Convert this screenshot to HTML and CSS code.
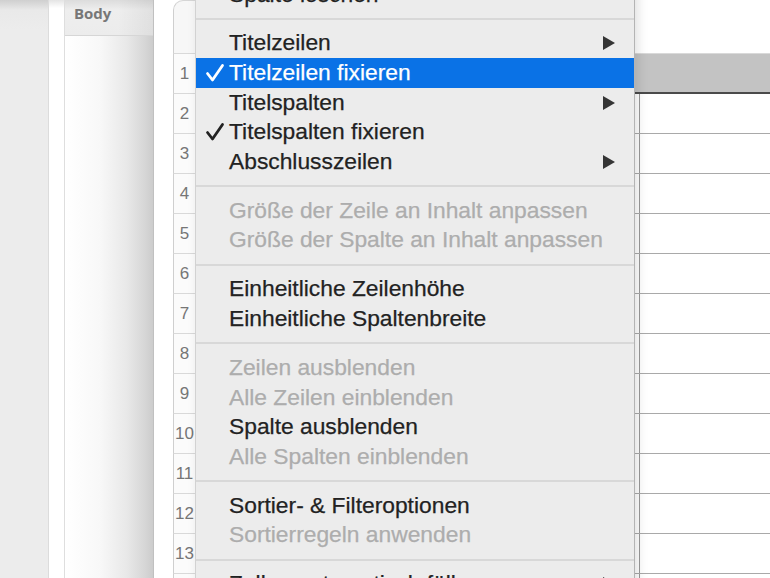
FILE: index.html
```html
<!DOCTYPE html>
<html lang="de">
<head>
<meta charset="utf-8">
<title>Tabelle Menü</title>
<link rel="stylesheet" href="styles.css">
</head>
<body>
<div class="app">
  <div class="side"></div>
  <div class="gap1"></div>
  <div class="panel">
    <div class="panel-head">Body</div>
    <div class="panel-body"></div>
  </div>
  <div class="gap2"></div>
  <div class="sheet">
    <div class="row row-top"><div class="rh corner"></div><div class="c1"></div><div class="c2"></div></div>
    <div class="row row-head"><div class="rh">1</div><div class="c1"></div><div class="c2"></div></div>
    <div class="row"><div class="rh">2</div><div class="c1"></div><div class="c2"></div></div>
    <div class="row"><div class="rh">3</div><div class="c1"></div><div class="c2"></div></div>
    <div class="row"><div class="rh">4</div><div class="c1"></div><div class="c2"></div></div>
    <div class="row"><div class="rh">5</div><div class="c1"></div><div class="c2"></div></div>
    <div class="row"><div class="rh">6</div><div class="c1"></div><div class="c2"></div></div>
    <div class="row"><div class="rh">7</div><div class="c1"></div><div class="c2"></div></div>
    <div class="row"><div class="rh">8</div><div class="c1"></div><div class="c2"></div></div>
    <div class="row"><div class="rh">9</div><div class="c1"></div><div class="c2"></div></div>
    <div class="row"><div class="rh">10</div><div class="c1"></div><div class="c2"></div></div>
    <div class="row"><div class="rh">11</div><div class="c1"></div><div class="c2"></div></div>
    <div class="row"><div class="rh">12</div><div class="c1"></div><div class="c2"></div></div>
    <div class="row"><div class="rh">13</div><div class="c1"></div><div class="c2"></div></div>
    <div class="row"><div class="rh"></div><div class="c1"></div><div class="c2"></div></div>
  </div>
</div>

<div class="menu">
  <div class="item">Spalte löschen</div>
  <div class="sep"></div>
  <div class="item">Titelzeilen<span class="arrow"></span></div>
  <div class="item active"><svg class="check" viewBox="0 0 20 20" width="20" height="20"><path d="M2.5 10.5 L7.5 17 L17.5 2.5" fill="none" stroke="currentColor" stroke-width="2.8" stroke-linecap="round" stroke-linejoin="round"/></svg>Titelzeilen fixieren</div>
  <div class="item">Titelspalten<span class="arrow"></span></div>
  <div class="item"><svg class="check" viewBox="0 0 20 20" width="20" height="20"><path d="M2.5 10.5 L7.5 17 L17.5 2.5" fill="none" stroke="currentColor" stroke-width="2.8" stroke-linecap="round" stroke-linejoin="round"/></svg>Titelspalten fixieren</div>
  <div class="item">Abschlusszeilen<span class="arrow"></span></div>
  <div class="sep"></div>
  <div class="item off">Größe der Zeile an Inhalt anpassen</div>
  <div class="item off">Größe der Spalte an Inhalt anpassen</div>
  <div class="sep"></div>
  <div class="item">Einheitliche Zeilenhöhe</div>
  <div class="item">Einheitliche Spaltenbreite</div>
  <div class="sep"></div>
  <div class="item off">Zeilen ausblenden</div>
  <div class="item off">Alle Zeilen einblenden</div>
  <div class="item">Spalte ausblenden</div>
  <div class="item off">Alle Spalten einblenden</div>
  <div class="sep"></div>
  <div class="item">Sortier- &amp; Filteroptionen</div>
  <div class="item off">Sortierregeln anwenden</div>
  <div class="sep"></div>
  <div class="item">Zellen automatisch füllen<span class="arrow"></span></div>
</div>
</body>
</html>
```

FILE: styles.css
```css
html, body {
  margin: 0;
  padding: 0;
}
body {
  width: 770px;
  height: 578px;
  overflow: hidden;
  position: relative;
  background: #ffffff;
  font-family: "Liberation Sans", Arial, sans-serif;
}
.app {
  display: flex;
  height: 578px;
}
.side {
  width: 48px;
  flex: none;
  background: linear-gradient(#cfcfcf 0px, #e9e9e9 10px, #ececec 30px);
  border-right: 1px solid #dcdcdc;
}
.gap1 {
  width: 15px;
  flex: none;
  background: linear-gradient(#e4e4e4 0px, #ffffff 8px);
  border-right: 1px solid #dedede;
}
.panel {
  width: 88px;
  flex: none;
  display: flex;
  flex-direction: column;
  border-right: 1px solid #c0c0c0;
}
.panel-head {
  height: 35px;
  border-bottom: 1px solid #d6d6d6;
  background: linear-gradient(90deg, rgba(255,255,255,0) 60%, rgba(0,0,0,0.06) 100%), linear-gradient(#dcdcdc 0px, #eeeeee 10px, #ececec);
  color: #777777;
  font-family: "Open Sans", "Liberation Sans", sans-serif;
  font-weight: 700;
  font-size: 15px;
  line-height: 26px;
  padding-left: 9px;
}
.panel-body {
  flex: 1;
  background: linear-gradient(90deg, #ffffff 0px, #f8f8f8 35px, #e8e8e8 62px, #d6d6d6 80px, #cccccc 88px);
}
.gap2 {
  width: 19px;
  flex: none;
  background: #ffffff;
}
.sheet {
  flex: 1;
  display: flex;
  flex-direction: column;
}
.row {
  display: flex;
  height: 40px;
  flex: none;
  box-sizing: border-box;
  border-bottom: 1px solid #a9a9a9;
}
.rh {
  width: 22px;
  flex: none;
  box-sizing: border-box;
  border-left: 1px solid #cfcfcf;
  background: #fbfbfb;
  color: #767676;
  font-size: 17px;
  line-height: 40px;
  text-align: center;
  white-space: nowrap;
  overflow: visible;
}
.c1 {
  width: 445px;
  flex: none;
  box-sizing: border-box;
  border-right: 1px solid #9a9a9a;
}
.c2 {
  flex: 1;
}
.row-top {
  height: 54px;
  border-bottom: none;
}
.row-top .corner {
  border-top: 1px solid #d6d6d6;
  border-top-left-radius: 10px;
  border-bottom: 1px solid #cfcfcf;
  background: #f7f7f7;
}
.row-top .c1 {
  border-right: none;
  border-bottom: 1px solid #d9d9d9;
}
.row-top .c2 {
  border-bottom: 1px solid #d9d9d9;
}
.row-head {
  border-bottom: none;
}
.row-head .rh {
  border-bottom: 1px solid #d6d6d6;
}
.row-head .c1,
.row-head .c2 {
  background: #c3c3c3;
  border-bottom: 2px solid #4a4a4a;
  border-right: none;
}
.row .rh {
  margin-bottom: -1px;
  border-bottom: 1px solid #d9d9d9;
}
.row-top .rh {
  margin-bottom: 0;
}
.row-head .rh {
  margin-bottom: 0;
}

/* Context menu */
.menu {
  position: absolute;
  left: 195px;
  top: -20.5px;
  width: 440px;
  box-sizing: border-box;
  background: #ececec;
  border-left: 1px solid #d2d2d2;
  border-right: 1px solid #b4b4b4;
  box-shadow: 3px 0 10px rgba(0, 0, 0, 0.12);
}
.item {
  position: relative;
  height: 29.6px;
  line-height: 29.6px;
  padding-left: 33px;
  font-size: 22.8px;
  color: #222222;
  white-space: nowrap;
  -webkit-text-stroke: 0.25px currentColor;
}
.item.off {
  color: #adadad;
}
.item.active {
  background: #0a72e6;
  color: #ffffff;
}
.check {
  position: absolute;
  left: 9px;
  top: 5px;
  color: #222222;
}
.item.active .check {
  color: #ffffff;
}
.arrow {
  position: absolute;
  right: 19px;
  top: 8px;
  width: 0;
  height: 0;
  border-top: 7px solid transparent;
  border-bottom: 7px solid transparent;
  border-left: 12px solid #353535;
}
.sep {
  height: 19.4px;
  display: flex;
  align-items: center;
}
.sep::before {
  content: "";
  display: block;
  width: 100%;
  height: 2px;
  background: #d8d8d8;
}
```
